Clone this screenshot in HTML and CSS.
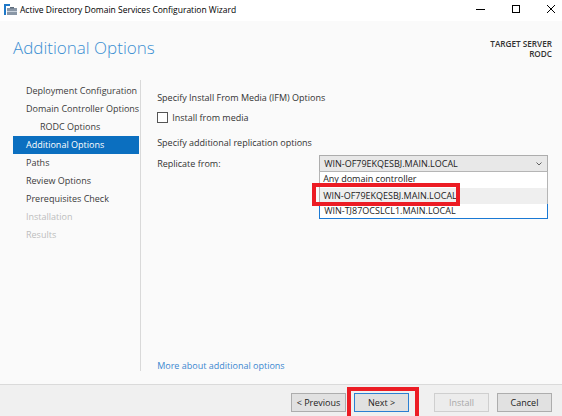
FILE: index.html
```html
<!DOCTYPE html>
<html>
<head>
<meta charset="utf-8">
<link rel="stylesheet" href="styles.css">
</head>
<body>
<div class="window">
  <div class="titlebar">
    <svg class="app-icon" width="14" height="11" viewBox="0 0 14 11">
      <rect x="0" y="0" width="6" height="2" fill="#1e78c8"/>
      <rect x="0" y="2" width="2" height="9" fill="#1e78c8"/>
      <rect x="3" y="4" width="10" height="7" fill="#8a97a6"/>
      <rect x="6" y="3" width="4" height="1.5" fill="#5f6d7c"/>
      <rect x="3" y="7" width="10" height="1" fill="#c9d2dc"/>
    </svg>
    <span class="title-text">Active Directory Domain Services Configuration Wizard</span>
    <div class="controls">
      <svg width="10" height="10" viewBox="0 0 10 10"><line x1="0" y1="5.5" x2="9" y2="5.5" stroke="#000" stroke-width="1"/></svg>
      <svg width="10" height="10" viewBox="0 0 10 10"><rect x="1.5" y="1.5" width="7" height="7" fill="none" stroke="#000" stroke-width="1"/></svg>
      <svg width="10" height="10" viewBox="0 0 10 10"><path d="M1 1 L9 9 M9 1 L1 9" stroke="#000" stroke-width="1"/></svg>
    </div>
  </div>
  <div class="main">
    <div class="header">
      <h1 class="page-title">Additional Options</h1>
      <div class="target">TARGET SERVER<br>RODC</div>
    </div>
    <div class="body">
      <ul class="nav">
        <li>Deployment Configuration</li>
        <li>Domain Controller Options</li>
        <li class="sub">RODC Options</li>
        <li class="active">Additional Options</li>
        <li>Paths</li>
        <li>Review Options</li>
        <li>Prerequisites Check</li>
        <li class="disabled">Installation</li>
        <li class="disabled">Results</li>
      </ul>
      <div class="content">
        <div class="section-title">Specify Install From Media (IFM) Options</div>
        <label class="check-row"><span class="checkbox"></span>Install from media</label>
        <div class="section-title second">Specify additional replication options</div>
        <div class="rep-row">
          <span class="rep-label">Replicate from:</span>
          <div class="combo-wrap">
            <div class="combo">
              <span>WIN-OF79EKQESBJ.MAIN.LOCAL</span>
              <svg class="chev" width="6" height="4" viewBox="0 0 6 4"><path d="M0.5 0.5 L3 3 L5.5 0.5" fill="none" stroke="#606060" stroke-width="1"/></svg>
            </div>
            <div class="dropdown">
              <div class="opt first">Any domain controller</div>
              <div class="opt hover">WIN-OF79EKQESBJ.MAIN.LOCAL</div>
              <div class="opt focus">WIN-TJ87OCSLCL1.MAIN.LOCAL</div>
            </div>
            <div class="redbox opt-mark"></div>
          </div>
        </div>
        <a class="more" href="#">More about additional options</a>
      </div>
    </div>
  </div>
  <div class="footer">
    <button class="btn">&lt; Previous</button>
    <div class="next-wrap">
      <button class="btn default">Next &gt;</button>
      <div class="redbox next-mark"></div>
    </div>
    <button class="btn disabled install">Install</button>
    <button class="btn">Cancel</button>
  </div>
</div>
</body>
</html>
```

FILE: styles.css
```css
* { box-sizing: border-box; }
html, body { margin: 0; padding: 0; }
body {
  width: 562px;
  height: 416px;
  overflow: hidden;
  font-family: "Open Sans", "Noto Sans", sans-serif;
  font-size: 9px;
  color: #333;
  background: #fafafa;
}
.window {
  width: 562px;
  height: 416px;
  display: flex;
  flex-direction: column;
}
.titlebar {
  height: 21px;
  background: #fff;
  display: flex;
  align-items: center;
  padding-left: 4px;
}
.app-icon { margin-right: 2px; margin-top: -2px; }
.title-text {
  font-size: 8.5px;
  color: #000;
  margin-top: -2px;
}
.controls {
  margin-left: auto;
  display: flex;
  gap: 25px;
  padding-right: 6px;
  margin-top: -3px;
}
.main {
  flex: 1;
  background: #fafafa;
  display: flex;
  flex-direction: column;
  padding-bottom: 13px;
}
.header {
  height: 59px;
  display: flex;
  justify-content: space-between;
  padding: 0 10px 0 13px;
}
.page-title {
  margin: 0;
  font-weight: 300;
  font-size: 17px;
  color: #3a8fd2;
  padding-top: 15px;
}
.target {
  text-align: right;
  font-weight: 600;
  font-size: 8.2px;
  line-height: 10px;
  color: #333;
  padding-top: 18px;
}
.body {
  flex: 1;
  display: flex;
}
.nav {
  list-style: none;
  margin: 0 0 0 13px;
  padding: 2px 0 0 0;
  width: 130px;
  border-right: 1px solid #d9d9d9;
}
.nav li {
  height: 18px;
  line-height: 18px;
  padding-left: 13px;
  margin-right: 1px;
  color: #3a3a3a;
  white-space: nowrap;
}
.nav li.sub { padding-left: 27px; }
.nav li.active { background: #0b6fc0; color: #fff; }
.nav li.disabled { color: #bdbdbd; }
.content {
  flex: 1;
  display: flex;
  flex-direction: column;
  padding: 11px 14px 0 16px;
}
.section-title {
  line-height: 14px;
  color: #333;
}
.section-title.second { margin-top: 12px; }
.check-row {
  display: flex;
  align-items: center;
  height: 14px;
  margin-top: 5px;
  color: #333;
}
.checkbox {
  width: 11px;
  height: 11px;
  border: 1px solid #555;
  background: #fff;
  margin-right: 4px;
}
.rep-row {
  display: flex;
  align-items: center;
  margin-top: 5px;
}
.rep-label { width: 162px; }
.combo-wrap { position: relative; width: 229px; }
.combo {
  height: 17px;
  border: 1px solid #adadad;
  background: #e8e8e8;
  display: flex;
  align-items: center;
  padding-left: 4px;
  padding-right: 5px;
  color: #222;
}
.chev { margin-left: auto; }
.dropdown {
  position: absolute;
  left: 0;
  top: 16px;
  width: 229px;
  background: #fff;
  border: 1px solid #b5b5b5;
  border-bottom: none;
  z-index: 2;
}
.opt {
  height: 16px;
  line-height: 16px;
  padding-left: 3px;
  color: #222;
  white-space: nowrap;
  overflow: hidden;
}
.opt.first { line-height: 14px; }
.opt.hover { background: #efefef; }
.opt.focus {
  height: 15px;
  line-height: 14px;
  margin: 0 -1px;
  border: 1px solid #1a79d4;
  border-top: none;
  padding-left: 4px;
}
.redbox {
  position: absolute;
  border: 4px solid #ec1c24;
  z-index: 3;
  pointer-events: none;
}
.opt-mark {
  left: -7px;
  top: 28px;
  width: 148px;
  height: 23px;
}
.more {
  margin-top: auto;
  color: #3a87d0;
  text-decoration: none;
  line-height: 14px;
  margin-bottom: -2px;
}
.footer {
  height: 32px;
  border-top: 1px solid #dadada;
  background: #f0f0f0;
  display: flex;
  align-items: flex-start;
  justify-content: flex-end;
  padding: 8px 10px 0 0;
  gap: 8px;
}
.btn {
  width: 55px;
  height: 19px;
  padding: 0;
  font-family: "Open Sans", "Noto Sans", sans-serif;
  font-size: 9px;
  color: #222;
  background: #e1e1e1;
  border: 1px solid #adadad;
  border-radius: 0;
}
.btn.default { border-color: #2b7fd2; background: #e1e1e1; }
.btn.disabled { color: #a8a8a8; background: #ececec; border-color: #cfcfcf; }
.btn.install { margin-left: 17px; }
.next-wrap { position: relative; }
.next-mark {
  left: -7px;
  top: -6px;
  width: 72px;
  height: 34px;
}
```
